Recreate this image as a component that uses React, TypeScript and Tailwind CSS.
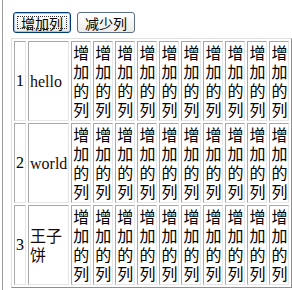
import React from 'react'

const rows = [
  { n: '1', label: 'hello' },
  { n: '2', label: 'world' },
  { n: '3', label: '王子饼' },
]

const cols = Array.from({ length: 10 }, (_, i) => i)

const cjk = "'Noto Sans CJK SC', 'Noto Sans CJK JP', sans-serif"
const serif = "'Liberation Serif', 'Noto Sans CJK SC', serif"

export default function App() {
  return (
    <div className="w-[292px] h-[290px] bg-white overflow-hidden">
      <div className="ml-[2px] h-full border-l border-[#9a9a9a] pl-[8px] pt-[12px]">
        <div className="flex gap-[6px] ml-[2px]">
          {/* default button with focus ring */}
          <button
            className="relative w-[58px] h-[21px] rounded-[3px] border border-[#003c74] bg-gradient-to-b from-white to-[#ecebe6] text-[14px] leading-none text-black shadow-[inset_0_0_0_1px_#a8c4ec]"
            style={{ fontFamily: cjk }}
          >
            <span className="absolute inset-[3px] border border-dotted border-[#333]" />
            增加列
          </button>
          <button
            className="w-[58px] h-[21px] rounded-[3px] border border-[#5a6e8a] bg-gradient-to-b from-white to-[#ecebe6] text-[14px] leading-none text-black"
            style={{ fontFamily: cjk }}
          >
            减少列
          </button>
        </div>

        <table
          className="mt-[5px] w-px border-separate border-spacing-[2px] border border-t-[#e0e0e0] border-l-[#e0e0e0] border-b-[#909090] border-r-[#909090]"
        >
          <tbody>
            {rows.map((r) => (
              <tr key={r.n}>
                <td
                  className="p-px border border-t-[#a8a8a8] border-l-[#a8a8a8] border-b-[#e6e6e6] border-r-[#e6e6e6] align-middle text-[16px] text-black"
                  style={{ fontFamily: serif }}
                >
                  {r.n}
                </td>
                <td
                  className="p-px border border-t-[#a8a8a8] border-l-[#a8a8a8] border-b-[#e6e6e6] border-r-[#e6e6e6] align-middle text-[16px] leading-[19px] text-[#1a0a0a]"
                  style={{ fontFamily: r.n === '3' ? cjk : serif }}
                >
                  {r.label}
                </td>
                {cols.map((c) => (
                  <td
                    key={c}
                    className="p-px border border-t-[#a8a8a8] border-l-[#a8a8a8] border-b-[#e6e6e6] border-r-[#e6e6e6] text-[16px] leading-[19px] text-black"
                    style={{ fontFamily: cjk }}
                  >
                    增加的列
                  </td>
                ))}
              </tr>
            ))}
          </tbody>
        </table>
      </div>
    </div>
  )
}
